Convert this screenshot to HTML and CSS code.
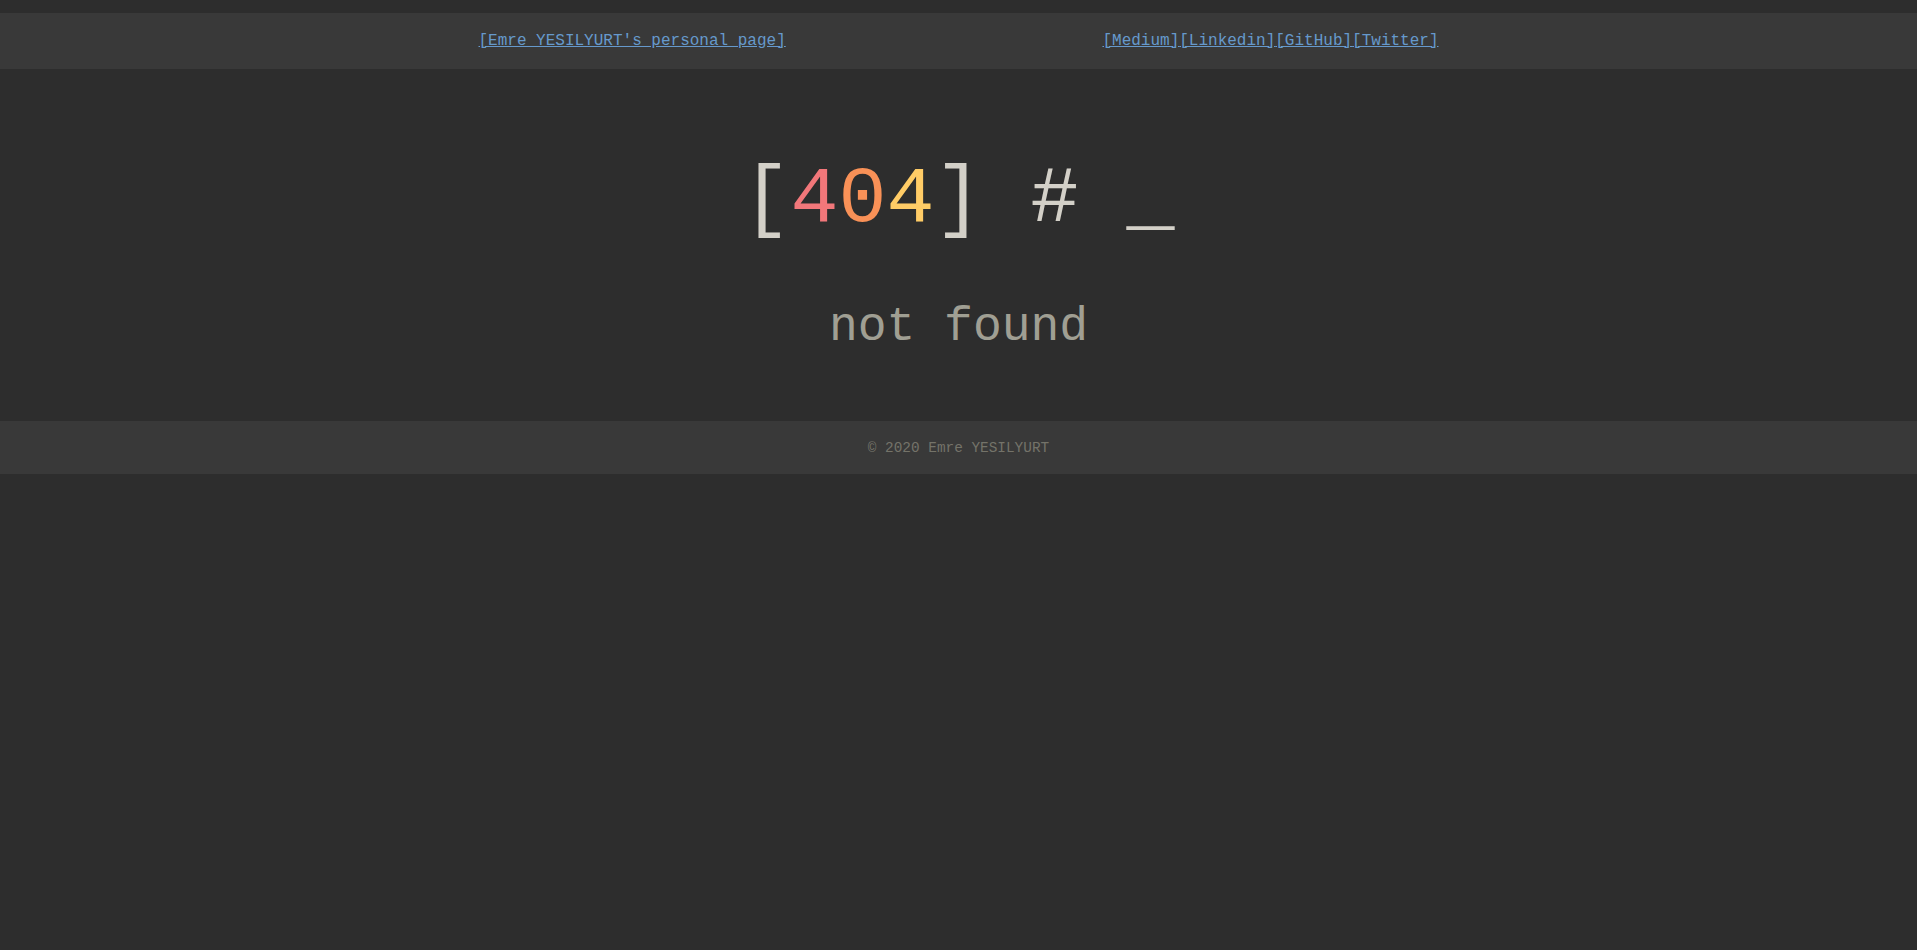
FILE: index.html
```html
<!DOCTYPE html>
<html lang="en">
<head>
<meta charset="utf-8">
<title>404 - not found</title>
<link rel="stylesheet" href="styles.css">
</head>
<body>
  <header class="topbar">
    <nav class="topbar-inner">
      <a class="link" href="#">[Emre YESILYURT's personal page]</a>
      <span class="social"><a class="link" href="#">[Medium]</a><a class="link" href="#">[Linkedin]</a><a class="link" href="#">[GitHub]</a><a class="link" href="#">[Twitter]</a></span>
    </nav>
  </header>
  <main class="content">
    <h1 class="code"><span class="fg">[</span><span class="red">4</span><span class="orange">0</span><span class="yellow">4</span><span class="fg">] # _</span></h1>
    <p class="message">not found</p>
  </main>
  <footer class="footer">© 2020 Emre YESILYURT</footer>
</body>
</html>
```

FILE: styles.css
```css
html, body {
  margin: 0;
  padding: 0;
  background: #2d2d2d;
}

body {
  padding-top: 13px;
  font-family: "Liberation Mono", "DejaVu Sans Mono", monospace;
  color: #d3d0c8;
}

.topbar {
  background: #393939;
  height: 56px;
  display: flex;
  align-items: center;
}

.topbar-inner {
  width: 960px;
  margin: 0 auto;
  display: flex;
  justify-content: space-between;
  font-size: 16px;
}

.link {
  color: #6699cc;
  text-decoration: underline;
}

.content {
  text-align: center;
  padding-top: 85px;
  padding-bottom: 67px;
}

.code {
  margin: 0;
  font-size: 80px;
  font-weight: normal;
  line-height: normal;
  white-space: pre;
}

.fg { color: #d3d0c8; }
.red { color: #f2777a; }
.orange { color: #f99157; }
.yellow { color: #ffcc66; }

.message {
  margin: 55px 0 0;
  font-size: 48px;
  line-height: normal;
  color: #a09f93;
}

.footer {
  background: #393939;
  height: 53px;
  display: flex;
  align-items: center;
  justify-content: center;
  font-size: 14.4px;
  color: #747369;
}
```
